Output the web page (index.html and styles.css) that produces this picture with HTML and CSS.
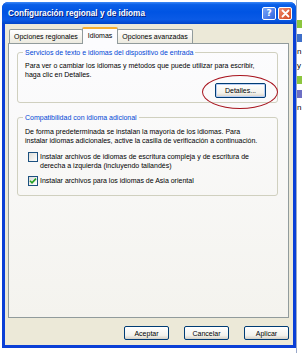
FILE: index.html
```html
<!DOCTYPE html>
<html lang="es">
<head>
  <meta charset="UTF-8" />
  <title>Configuración regional y de idioma</title>
  <link rel="stylesheet" href="styles.css">
</head>
<body>

<div class="screen">
  <div class="window">
    <div class="titlebar">
      <span class="title">Configuración regional y de idioma</span>
      <span class="tbtn help">?</span>
      <span class="tbtn close">
        <svg width="9" height="9" viewBox="0 0 9 9"><path d="M1.5 1.5 L7.5 7.5 M7.5 1.5 L1.5 7.5" stroke="#fff" stroke-width="1.8" stroke-linecap="round"/></svg>
      </span>
    </div>

    <div class="client">
      <div class="tabs">
        <span class="tab">Opciones regionales</span>
        <span class="tab active">Idiomas</span>
        <span class="tab">Opciones avanzadas</span>
      </div>

      <div class="panel">
        <fieldset class="group first">
          <legend>Servicios de texto e idiomas del dispositivo de entrada</legend>
          <p>Para ver o cambiar los idiomas y métodos que puede utilizar para escribir,<br>haga clic en Detalles.</p>
          <div class="row-right">
            <span class="btn details">Detalles...
              <span class="circle"></span>
            </span>
          </div>
        </fieldset>

        <fieldset class="group second">
          <legend>Compatibilidad con idioma adicional</legend>
          <p>De forma predeterminada se instalan la mayoría de los idiomas. Para<br>instalar idiomas adicionales, active la casilla de verificación a continuación.</p>
          <div class="check">
            <span class="box"></span>
            <span>Instalar archivos de idiomas de escritura compleja y de escritura de<br>derecha a izquierda (incluyendo tailandés)</span>
          </div>
          <div class="check">
            <span class="box checked">
              <svg width="8" height="8" viewBox="0 0 8 8"><path d="M1 3.8 L3 5.8 L7 1.6" fill="none" stroke="#21a121" stroke-width="1.6"/></svg>
            </span>
            <span>Instalar archivos para los idiomas de Asia oriental</span>
          </div>
        </fieldset>
      </div>

      <div class="buttons">
        <span class="btn">Aceptar</span>
        <span class="btn">Cancelar</span>
        <span class="btn">Aplicar</span>
      </div>
    </div>
  </div>

  <div class="behind">
    <span class="bit green"></span>
    <span class="bit blue"></span>
    <span class="bit letter">n</span>
    <span class="bit letter">y</span>
    <span class="bit green"></span>
    <span class="bit purple"></span>
    <span class="bit letter">n</span>
  </div>
</div>

</body>
</html>
```

FILE: styles.css
```css
body {
  margin: 0;
  background-color: #ffffff;
  font-family: "Liberation Sans", Arial, sans-serif;
  font-size: 7px;
  color: #000000;
}

.screen {
  display: flex;
  width: 302px;
  height: 353px;
  overflow: hidden;
}

.window {
  flex: none;
  width: 294px;
  height: 346px;
  margin: 2px 0 0 2px;
  display: flex;
  flex-direction: column;
  background-color: #0a3fd6;
  border-radius: 6px 6px 0 0;
}

.titlebar {
  height: 22px;
  display: flex;
  align-items: center;
  padding: 0 4px 0 6px;
  border-radius: 6px 6px 0 0;
  background: linear-gradient(#3d8af7 0%, #0a5fe8 12%, #0054e3 45%, #0a5ae6 80%, #0044c8 100%);
}

.title {
  flex: 1;
  color: #ffffff;
  font-family: "Liberation Sans", Arial, sans-serif;
  font-weight: bold;
  font-size: 8.2px;
  text-shadow: 1px 1px 0 #0a1f7c;
}

.tbtn {
  width: 12px;
  height: 11px;
  border: 1px solid #ffffff;
  border-radius: 2px;
  display: flex;
  align-items: center;
  justify-content: center;
  margin-left: 2px;
}

.help {
  background: linear-gradient(135deg, #7aa6f8, #2d63e0);
  color: #ffffff;
  font-family: "DejaVu Sans", sans-serif;
  font-weight: bold;
  font-size: 9px;
}

.close {
  background: linear-gradient(135deg, #ef8a6c, #d3451f);
}

.client {
  flex: 1;
  margin: 0 3px 3px 3px;
  background-color: #ece9d8;
  padding: 3px 4px 0 3px;
  display: flex;
  flex-direction: column;
}

.tabs {
  display: flex;
  align-items: flex-end;
  height: 16px;
  padding-left: 1px;
}

.tab {
  height: 13px;
  line-height: 13px;
  padding: 0 4px;
  border: 1px solid #919b9c;
  border-bottom: none;
  border-radius: 2px 2px 0 0;
  background: linear-gradient(#ffffff, #eceadf);
  margin-right: -1px;
}

.tab.active {
  height: 15px;
  line-height: 14px;
  background-color: #fcfcfe;
  background-image: none;
  border-top: 2px solid #f9b030;
  position: relative;
  z-index: 1;
  margin-bottom: -1px;
  padding: 0 5px;
}

.panel {
  box-sizing: border-box;
  height: 275px;
  border: 1px solid #919b9c;
  background: linear-gradient(#fcfcfe, #f4f3ee);
  padding: 4px 10px 0 8px;
}

.group {
  margin: 0;
  border: 1px solid #d0d0bf;
  border-radius: 3px;
  padding: 4px 7px 4px 7px;
}

.group legend {
  color: #0046d5;
  line-height: 9px;
  padding: 0 2px;
  margin-left: -2px;
}

.group p {
  margin: 0;
  line-height: 9px;
}

.row-right {
  display: flex;
  justify-content: flex-end;
  margin-top: 4px;
  padding-right: 4px;
}

.btn {
  box-sizing: border-box;
  display: inline-flex;
  align-items: center;
  justify-content: center;
  width: 45px;
  height: 14px;
  border: 1px solid #003c74;
  border-radius: 2px;
  background: linear-gradient(#ffffff, #f3f2ec 70%, #d6d0c5);
}

.details {
  position: relative;
  width: 51px;
  height: 15px;
  box-shadow: inset 0 0 0 1px #b9cff5;
}

.circle {
  position: absolute;
  left: -14px;
  top: -9px;
  width: 74px;
  height: 32px;
  border: 1px solid #a8141e;
  border-radius: 50%;
}

.second {
  margin-top: 10px;
  padding-top: 5px;
  padding-bottom: 9px;
}

.check {
  display: flex;
  align-items: flex-start;
  gap: 2px;
  margin-left: 3px;
  line-height: 9px;
  margin-top: 7px;
}

.check + .check {
  margin-top: 6px;
}

.box {
  box-sizing: border-box;
  flex: none;
  width: 10px;
  height: 10px;
  border: 1px solid #1c5180;
  background: linear-gradient(135deg, #dcdcd7, #ffffff);
  display: flex;
  align-items: center;
  justify-content: center;
}

.buttons {
  display: flex;
  justify-content: flex-end;
  gap: 15px;
  padding-top: 8px;
}

.behind {
  flex: 1;
  display: flex;
  flex-direction: column;
  padding-top: 20px;
  gap: 6px;
  border-left: 1px solid #9aa8c8;
}

.bit {
  display: block;
  height: 8px;
  font-size: 8px;
  line-height: 8px;
}

.green {
  background-color: #8cc63e;
}

.blue {
  background-color: #3e6fc9;
}

.purple {
  background-color: #6d6fc4;
}
```
